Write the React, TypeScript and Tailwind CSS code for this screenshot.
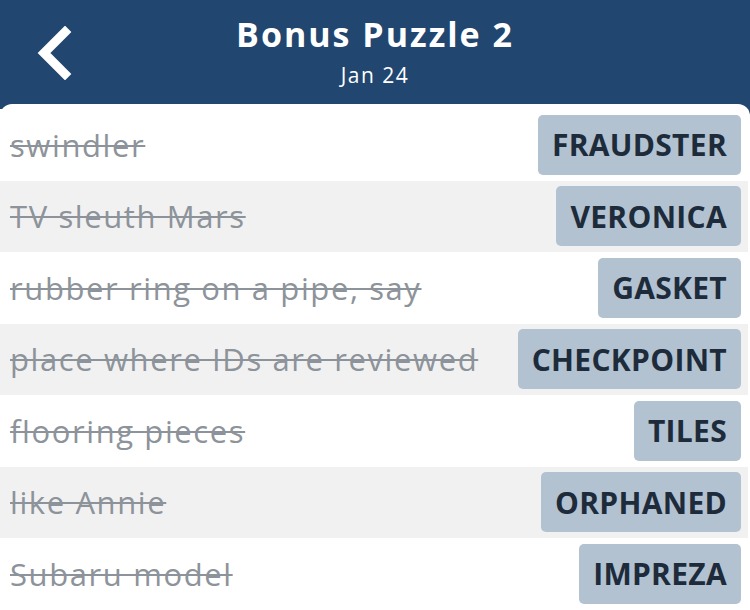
const ROWS: { clue: string; answer: string }[] = [
  { clue: "swindler", answer: "FRAUDSTER" },
  { clue: "TV sleuth Mars", answer: "VERONICA" },
  { clue: "rubber ring on a pipe, say", answer: "GASKET" },
  { clue: "place where IDs are reviewed", answer: "CHECKPOINT" },
  { clue: "flooring pieces", answer: "TILES" },
  { clue: "like Annie", answer: "ORPHANED" },
  { clue: "Subaru model", answer: "IMPREZA" },
];

export default function App() {
  return (
    <div
      className="h-[610px] w-[750px] overflow-hidden bg-[#21466f]"
      style={{ fontFamily: "'Open Sans', 'Noto Sans', sans-serif" }}
    >
      {/* Header */}
      <div className="relative flex h-[104px] flex-col items-center pt-[11px]">
        <svg
          className="absolute left-[34px] top-[26px]"
          width="40"
          height="54"
          viewBox="0 0 40 54"
        >
          <path
            d="M31 6 L10 27 L31 48"
            fill="none"
            stroke="white"
            strokeWidth="9"
            strokeLinecap="square"
          />
        </svg>
        <h1 className="text-[34px] font-bold leading-[46px] tracking-[2px] text-white">
          Bonus Puzzle 2
        </h1>
        <p className="mt-[6px] text-[21px] leading-[24px] tracking-[1.5px] text-white">
          Jan 24
        </p>
      </div>

      {/* Clue list */}
      <div className="h-[506px] rounded-t-[12px] bg-white pr-[2px] pt-[5px]">
        {ROWS.map((row, i) => (
          <div
            key={row.clue}
            className={`flex h-[71.5px] items-center justify-between pl-[10px] pr-[7px] ${
              i % 2 === 1 ? "bg-[#f1f1f1]" : "bg-white"
            }`}
          >
            <span className="text-[31px] tracking-[1.6px] text-[#8d939a] line-through decoration-[2px]">
              {row.clue}
            </span>
            <span className="flex h-[60px] items-center rounded-[5px] bg-[#b2c2d0] px-[14px] text-[30px] font-bold tracking-[0.3px] text-[#1d2b3b]">
              {row.answer}
            </span>
          </div>
        ))}
      </div>
    </div>
  );
}
